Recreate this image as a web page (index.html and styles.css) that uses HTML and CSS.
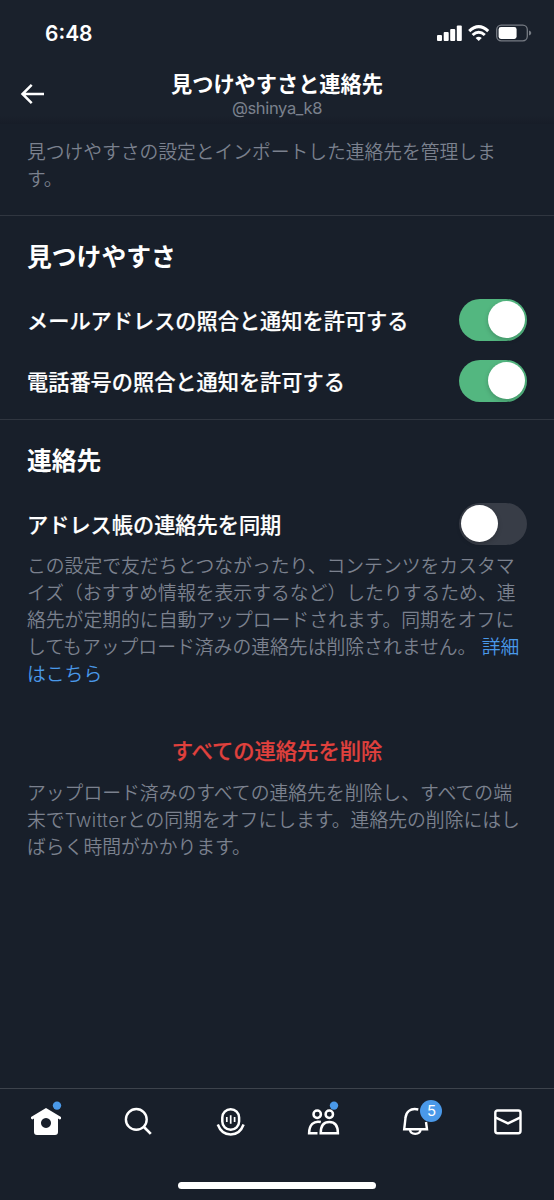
FILE: index.html
```html
<!DOCTYPE html>
<html lang="ja">
<head>
<meta charset="utf-8">
<title>見つけやすさと連絡先</title>
<link rel="stylesheet" href="styles.css">
</head>
<body>
<div class="screen">
  <header class="top">
    <div class="status">
      <span class="time">6:48</span>
      <svg class="status-icons" width="96" height="20" viewBox="0 0 96 20">
        <g fill="#fff">
          <rect x="1" y="12" width="5" height="6" rx="1"/>
          <rect x="7.700" y="9" width="5" height="9" rx="1"/>
          <rect x="14.200" y="6" width="5" height="12" rx="1"/>
          <rect x="20.800" y="2.500" width="5" height="15.500" rx="1"/>
          <path d="M42.700 18 L39.600 14.900 Q42.700 12.500 45.800 14.900 Z"/>
        </g>
        <g fill="none" stroke="#fff" stroke-width="3">
          <path d="M33.200 8.200 Q42.700 -0.800 52.200 8.200"/>
          <path d="M36.600 12 Q42.700 6.400 48.800 12"/>
        </g>
        <rect x="60.700" y="2.200" width="30.600" height="15.600" rx="4.500" fill="none" stroke="#767b83" stroke-width="1.300"/>
        <rect x="62.600" y="4.100" width="18" height="11.800" rx="2.300" fill="#fff"/>
        <path d="M93 7.500 Q95.300 8.300 95.300 10 T93 12.500 Z" fill="#767b83"/>
      </svg>
    </div>
    <div class="titlebar">
      <svg class="back" width="26" height="22" viewBox="0 0 26 22" fill="none" stroke="#fff" stroke-width="2.500">
        <path d="M25 11 H3.500 M12.700 1.800 L3.500 11 L12.700 20.200"/>
      </svg>
      <div class="titles">
        <h1 class="title">見つけやすさと連絡先</h1>
        <div class="handle">@shinya_k8</div>
      </div>
    </div>
  </header>

  <main class="content">
    <p class="note intro">見つけやすさの設定とインポートした連絡先を管理しま<br>す。</p>
    <section class="section">
      <h2 class="heading">見つけやすさ</h2>
      <div class="row"><span class="label">メールアドレスの照合と通知を許可する</span><span class="toggle on"><span class="knob"></span></span></div>
      <div class="row"><span class="label">電話番号の照合と通知を許可する</span><span class="toggle on"><span class="knob"></span></span></div>
    </section>
    <section class="section contacts">
      <h2 class="heading">連絡先</h2>
      <div class="row"><span class="label">アドレス帳の連絡先を同期</span><span class="toggle"><span class="knob"></span></span></div>
      <p class="note detail">この設定で友だちとつながったり、コンテンツをカスタマ<br>イズ（おすすめ情報を表示するなど）したりするため、連<br>絡先が定期的に自動アップロードされます。同期をオフに<br>してもアップロード済みの連絡先は削除されません。 <a class="link">詳細<br>はこちら</a></p>
      <div class="delete">すべての連絡先を削除</div>
      <p class="note detail">アップロード済みのすべての連絡先を削除し、すべての端<br>末で<span class="latin">Twitter</span>との同期をオフにします。連絡先の削除にはし<br>ばらく時間がかかります。</p>
    </section>
  </main>

  <nav class="tabs">
    <div class="tab">
      <svg width="44" height="44" viewBox="0 0 44 44">
        <path fill="#fff" fill-rule="evenodd" d="M22 8 L37 17 V19 L35.700 19.400 L34 18.600 V32 Q34 35 31 35 H13 Q10 35 10 32 V18.600 L8.300 19.400 L7 18.500 V17 Z M22 18 a5 5 0 1 0 .01 0 Z"/>
        <circle cx="33" cy="5.600" r="4.200" fill="#4a99e9"/>
      </svg>
    </div>
    <div class="tab">
      <svg width="44" height="44" viewBox="0 0 44 44" fill="none" stroke="#fff" stroke-width="2.400">
        <circle cx="20.300" cy="19.400" r="10.400"/><path d="M27.700 26.800 L34.800 33.900" stroke-width="2.700"/>
      </svg>
    </div>
    <div class="tab">
      <svg width="44" height="44" viewBox="0 0 44 44" fill="none" stroke="#fff" stroke-width="2.500">
        <rect x="13.300" y="9.200" width="16.800" height="20.600" rx="8.400"/>
        <path d="M8.800 24.500 C11.200 31 15.800 34.500 21.700 34.500 S32.200 31 34.600 24.500"/>
        <path d="M17.800 17 v5 M21.700 15.300 v8.400 M25.600 17 v5" stroke-width="1.700"/>
      </svg>
    </div>
    <div class="tab">
      <svg width="44" height="44" viewBox="0 0 44 44" fill="none" stroke="#fff" stroke-width="2.500">
        <circle cx="16.200" cy="14.200" r="3.700"/><circle cx="28.300" cy="14.200" r="3.700"/>
        <path d="M19.800 22 C12.500 20.400 8.200 25 8.100 33.200 H16.500"/>
        <path d="M19.700 33.200 C19.700 26 22.800 22 28.300 22 S36.900 26 36.900 33.200 Z"/>
        <circle cx="33" cy="5.600" r="4.200" fill="#4a99e9" stroke="none"/>
      </svg>
    </div>
    <div class="tab">
      <svg width="44" height="44" viewBox="0 0 44 44" fill="none" stroke="#fff" stroke-width="2.400">
        <path d="M25.300 9.500 C17 7.600 12.900 12.300 12.500 18 L11.200 29.300 H34 L33 22"/>
        <path d="M16.900 29.500 C17.500 35.300 27 35.300 27.600 29.500"/>
      </svg>
      <span class="badge">5</span>
    </div>
    <div class="tab">
      <svg width="44" height="44" viewBox="0 0 44 44" fill="none" stroke="#fff" stroke-width="2.400">
        <rect x="9.300" y="10.500" width="25.200" height="22.700" rx="2.200"/><path d="M9.300 17.300 L22 23.400 L34.500 17.300"/>
      </svg>
    </div>
  </nav>
  <div class="home-indicator"></div>
</div>
</body>
</html>
```
FILE: styles.css
```css
* { box-sizing: border-box; }
body {
  margin: 0;
  background: #181f2a;
  color: #fff;
  font-family: Inter, "Noto Sans CJK JP", sans-serif;
}
h1, h2, p { margin: 0; }
.screen {
  width: 554px;
  height: 1200px;
  display: flex;
  flex-direction: column;
  position: relative;
  overflow: hidden;
}
.top {
  height: 124px;
  background: linear-gradient(#1a212c 116px, #171d28);
}
.status {
  height: 66px;
  padding: 23px 22px 0 45px;
  display: flex;
  justify-content: space-between;
}
.time {
  font-size: 21px;
  line-height: 21px;
  font-weight: 600;
}
.titlebar {
  display: grid;
  grid-template-columns: 60px 1fr 60px;
}
.back { margin: 17px 0 0 19px; }
.titles { text-align: center; }
.title {
  padding-top: 1px;
  font-size: 21.200px;
  line-height: 34px;
  font-weight: 700;
  white-space: nowrap;
}
.handle {
  font-size: 16.500px;
  line-height: 15px;
  letter-spacing: -.35px;
  color: #7b818e;
}
.content { flex: 1; }
.note {
  padding: 0 27px;
  font-size: 18.750px;
  line-height: 27px;
  color: #7b818e;
  font-weight: 350;
  white-space: nowrap;
}
.detail { font-size: 18.820px; margin-top: -1px; }
.latin { letter-spacing: .5px; }
.intro { padding-top: 15px; height: 91px; }
.section {
  border-top: 1px solid #303640;
  height: 204px;
}
.heading {
  padding: 23px 27px 0;
  font-size: 24.800px;
  line-height: 36px;
  height: 73px;
  font-weight: 700;
}
.row {
  height: 61px;
  padding: 0 27px;
  display: flex;
  align-items: center;
  justify-content: space-between;
}
.label {
  padding-top: 2px;
  font-size: 21.200px;
  line-height: 30px;
  font-weight: 500;
  -webkit-text-stroke: .2px currentColor;
  white-space: nowrap;
}
.toggle {
  width: 68px;
  height: 42px;
  border-radius: 21px;
  background: #383d47;
  padding: 2.500px 2px;
  display: flex;
}
.on { background: #53b780; justify-content: flex-end; }
.knob {
  width: 37px;
  height: 37px;
  border-radius: 50%;
  background: #fff;
  box-shadow: 0 2px 5px rgba(0, 0, 0, .2);
}
.contacts { height: auto; }
.link { color: #4a99e9; }
.delete {
  padding: 48px 0 15px;
  text-align: center;
  color: #e0413d;
  font-size: 21.300px;
  line-height: 30px;
  font-weight: 500;
  -webkit-text-stroke: .2px currentColor;
}
.tabs {
  height: 112px;
  border-top: 1px solid #3d434c;
  padding-top: 11px;
  display: grid;
  grid-template-columns: repeat(6, 1fr);
  justify-items: center;
}
.tab { position: relative; width: 44px; height: 44px; }
.badge {
  position: absolute;
  left: 27px;
  top: 0;
  width: 22px;
  height: 22px;
  border-radius: 50%;
  background: #4a99e9;
  font-size: 15px;
  line-height: 22px;
  text-align: center;
}
.home-indicator {
  position: absolute;
  left: 178px;
  top: 1182px;
  width: 198px;
  height: 7px;
  border-radius: 4px;
  background: #fff;
}
```
